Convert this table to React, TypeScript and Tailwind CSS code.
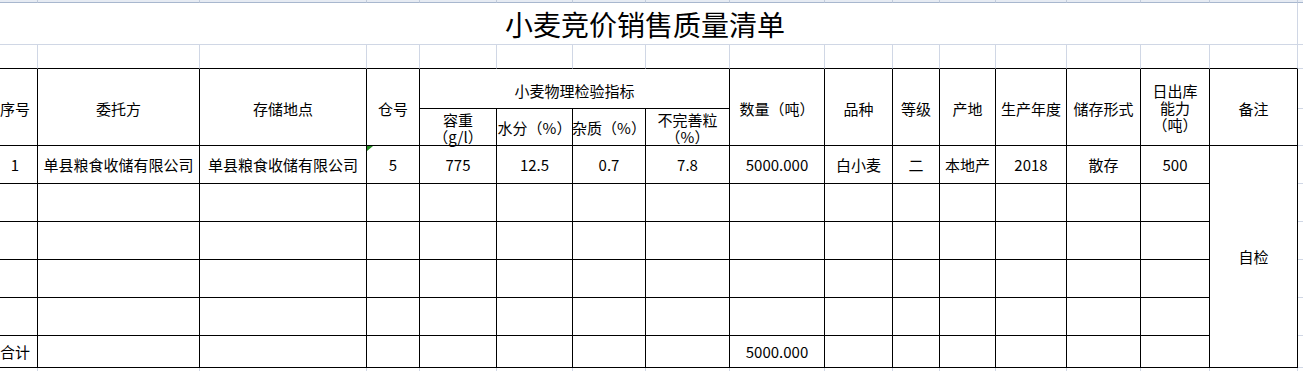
import React from 'react';

// spreadsheet-ish grid; first column is partly scrolled off the left edge
const grid = 'border-r border-b border-r-[#d0d7e5] border-b-[#d0d7e5]';
const cell = 'flex items-center justify-center text-center whitespace-nowrap border-r border-b border-black';

const Cell = ({ children, className = '' }: { children?: React.ReactNode; className?: string }) => (
  <div className={`${cell} ${className}`}>{children}</div>
);

const Extra = ({ className = '' }: { className?: string }) => <div className={`${grid} border-r-0 ${className}`} />;

const App = () => {
  const band = Array.from({ length: 17 });
  const rowC = Array.from({ length: 16 });
  const empty = Array.from({ length: 15 });

  return (
    <div className="w-full h-[371px] overflow-hidden bg-white">
      <div
        className="ml-[-7px] grid grid-cols-[45px_162px_167px_53px_77px_76px_73px_84px_95px_68px_47px_56px_71px_74px_69px_88px_40px] grid-rows-[3px_42px_24px_40px_37px_38px_38px_38px_38px_38px_32px_20px] text-[15px] leading-[17px] text-black"
        style={{ fontFamily: '"Noto Sans CJK SC", "Noto Sans", sans-serif' }}
      >
        {/* column header strip at the very top */}
        {band.map((_, i) => (
          <div key={`b${i}`} className="bg-[#e6ebf3] border-r border-b border-r-[#c2ccdc] border-b-[#a8b7ce]" />
        ))}

        {/* title */}
        <div className={`${grid} col-span-16 flex items-center justify-center text-[28px] leading-[32px]`}>
          小麦竞价销售质量清单
        </div>
        <Extra />

        {/* blank row above the table */}
        {rowC.map((_, i) => (
          <div key={`c${i}`} className="border-r border-b border-r-[#d0d7e5] border-b-black" />
        ))}
        <Extra />

        {/* header */}
        <Cell className="row-span-2 pt-[3px]">序号</Cell>
        <Cell className="row-span-2 pt-[3px]">委托方</Cell>
        <Cell className="row-span-2 pt-[3px]">存储地点</Cell>
        <Cell className="row-span-2 pt-[3px]">仓号</Cell>
        <Cell className="col-span-4 pt-[3px]">小麦物理检验指标</Cell>
        <Cell className="row-span-2 pt-[3px]">数量（吨）</Cell>
        <Cell className="row-span-2 pt-[3px]">品种</Cell>
        <Cell className="row-span-2 pt-[3px]">等级</Cell>
        <Cell className="row-span-2 pt-[3px]">产地</Cell>
        <Cell className="row-span-2 pt-[3px]">生产年度</Cell>
        <Cell className="row-span-2 pt-[3px]">储存形式</Cell>
        <Cell className="row-span-2">
          <p>
            日出库
            <br />
            能力
            <br />
            （吨）
          </p>
        </Cell>
        <Cell className="row-span-2 pt-[3px]">备注</Cell>
        <Extra />

        <Cell className="pt-[2px]">
          <p>
            容重
            <br />
            （g/l）
          </p>
        </Cell>
        <Cell>水分（%）</Cell>
        <Cell>杂质（%）</Cell>
        <Cell className="pt-[2px]">
          <p>
            不完善粒
            <br />
            （%）
          </p>
        </Cell>
        <Extra />

        {/* data */}
        <Cell>1</Cell>
        <Cell>单县粮食收储有限公司</Cell>
        <Cell>单县粮食收储有限公司</Cell>
        <Cell className="relative">
          <svg className="absolute left-0 top-0" width="6" height="6" viewBox="0 0 6 6">
            <polygon points="0,0 6,0 0,5" fill="#1f8a1f" />
          </svg>
          5
        </Cell>
        <Cell>775</Cell>
        <Cell>12.5</Cell>
        <Cell>0.7</Cell>
        <Cell>7.8</Cell>
        <Cell>5000.000</Cell>
        <Cell>白小麦</Cell>
        <Cell>二</Cell>
        <Cell>本地产</Cell>
        <Cell>2018</Cell>
        <Cell>散存</Cell>
        <Cell>500</Cell>
        <Cell className="row-span-6">自检</Cell>
        <Extra />

        {[0, 1, 2, 3].map((r) => (
          <React.Fragment key={`r${r}`}>
            {empty.map((_, i) => (
              <Cell key={`e${r}-${i}`} />
            ))}
            <Extra />
          </React.Fragment>
        ))}

        {/* total */}
        <Cell>合计</Cell>
        <Cell />
        <Cell />
        <Cell />
        <Cell />
        <Cell />
        <Cell />
        <Cell />
        <Cell>5000.000</Cell>
        <Cell />
        <Cell />
        <Cell />
        <Cell />
        <Cell />
        <Cell />
        <Extra />

        {/* gridline stubs below the table */}
        {rowC.map((_, i) => (
          <div key={`s${i}`} className="border-r border-r-[#d0d7e5]" />
        ))}
        <div />
      </div>
    </div>
  );
};

export default App;
